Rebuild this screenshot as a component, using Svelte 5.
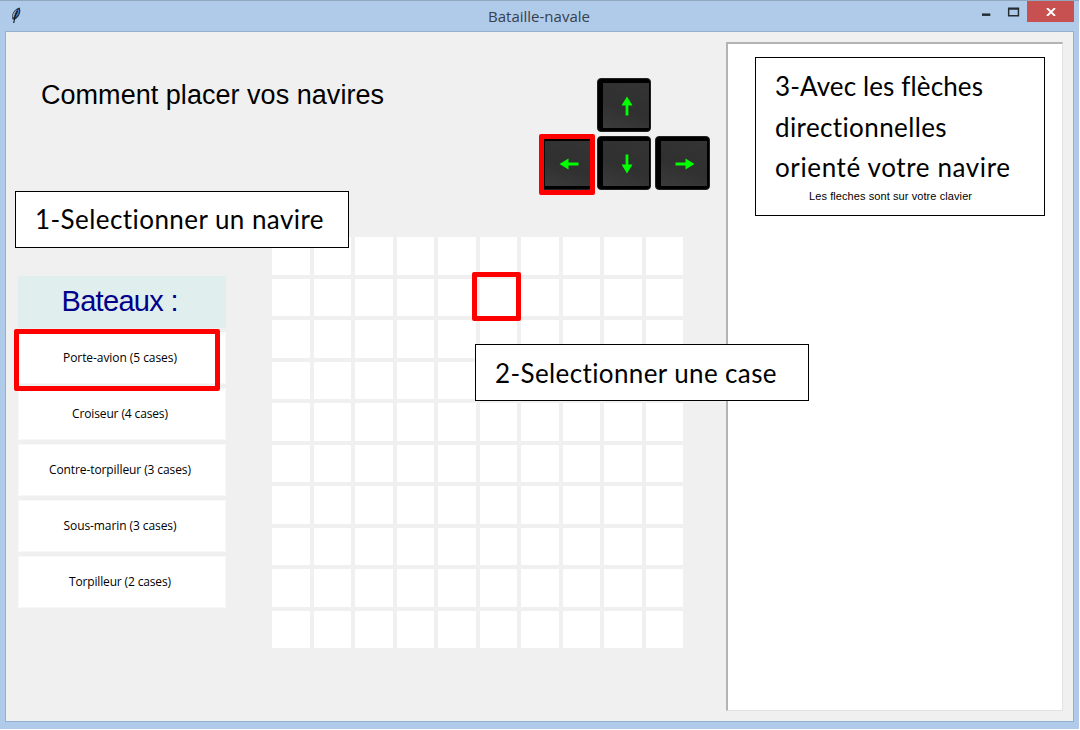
<script>
  const ships = [
    { name: 'Porte-avion (5 cases)', width: 114 },
    { name: 'Croiseur (4 cases)', width: 96 },
    { name: 'Contre-torpilleur (3 cases)', width: 142 },
    { name: 'Sous-marin (3 cases)', width: 113 },
    { name: 'Torpilleur (2 cases)', width: 102 }
  ];
  const cells = Array.from({ length: 100 }, (_, i) => i);
  const keys = [
    { area: 'up', turn: 0 },
    { area: 'left', turn: -90 },
    { area: 'down', turn: 180 },
    { area: 'right', turn: 90 }
  ];
  const steps = [
    { text: '3-Avec les flèches', width: 208 },
    { text: 'directionnelles', width: 172 },
    { text: 'orienté votre navire', width: 235 }
  ];

  // Spreads a line of text evenly over the given width.
  function fit(node, width) {
    const natural = node.getBoundingClientRect().width;
    const spacing = (width - natural) / (node.textContent.length - 1);
    node.style.letterSpacing = spacing + 'px';
    node.style.marginRight = -spacing + 'px';
  }
</script>

<div class="window">
  <header>
    <svg class="feather" width="14" height="18" viewBox="0 0 14 18">
      <path d="M2.600 12.500C.800 8 3.400 2.500 9.700.6c1.500 3.600.5 8.700-4.600 12z" fill="#26344a" />
      <path d="M4.800 10.800C5.500 7 7 4.500 9 2.300c.4 3-.8 6.500-4.200 8.500z" fill="#3e86e0" />
      <path d="M2.600 10C2.500 6.500 4.500 4 7.500 2.200 5.500 5 4.500 7 4 10.500z" fill="#9aa8b6" />
      <path d="M7.500 4Q4.500 9 3.700 16" fill="none" stroke="#111820" stroke-width="1.200" />
    </svg>
    <h1><span use:fit={102}>Bataille-navale</span></h1>
    <div class="controls">
      <svg width="46" height="21" viewBox="0 0 46 21"><path d="M0 12.500h8.500v2.500H0z" fill="#222a32" /><path fill-rule="evenodd" d="M26.500 6.500h11.500v9H26.500zM28 8.800v5.200h8.500v-5.200z" fill="#252c33" /></svg>
      <button class="close" aria-label="Fermer">
        <svg width="10" height="8" viewBox="0 0 10 8"><path d="M1 0l8 8M9 0L1 8" stroke="#fff" stroke-width="1.900" /></svg>
      </button>
    </div>
  </header>

  <main>
    <section class="game">
      <div class="top">
        <h2><span use:fit={343}>Comment placer vos navires</span></h2>
        <div class="keys">
          {#each keys as key}
            <div class="key" style:grid-area={key.area}>
              <svg width="20" height="20" viewBox="-10 -10 20 20">
                <path transform="rotate({key.turn})" d="M0-9.500L5.500-.5H1.400V9.500H-1.400V-.5H-5.500z" fill="#00ff00" />
              </svg>
            </div>
          {/each}
        </div>
      </div>
      <div class="play">
        <aside>
          <h3><span use:fit={117}>Bateaux :</span></h3>
          {#each ships as ship}
            <div class="ship"><span use:fit={ship.width}>{ship.name}</span></div>
          {/each}
        </aside>
        <div class="board">
          {#each cells as cell (cell)}<div class="cell"></div>{/each}
        </div>
      </div>
    </section>
    <section class="panel">
      <div class="callout keyhelp">
        {#each steps as step}
          <p><span use:fit={step.width}>{step.text}</span></p>
        {/each}
        <small><span use:fit={163}>Les fleches sont sur votre clavier</span></small>
      </div>
    </section>
  </main>

  <div class="mark mark-ship"></div>
  <div class="mark mark-cell"></div>
  <div class="mark mark-key"></div>
  <div class="callout first"><p><span use:fit={289}>1-Selectionner un navire</span></p></div>
  <div class="callout second"><p><span use:fit={282}>2-Selectionner une case</span></p></div>
</div>

<style>
  :global(body) { margin: 0; background: #fff; overflow: hidden; }
  * { box-sizing: border-box; }
  h1, h2, h3, p { margin: 0; font-weight: 400; }
  span { display: inline-block; white-space: nowrap; }
  .window {
    position: relative; width: 1079px; height: 729px; padding: 0 5px 7px 5px;
    background: #b0cbe9; border-top: 1px solid #91a6bf;
    display: flex; flex-direction: column; overflow: hidden;
  }
  header { height: 30px; display: flex; align-items: flex-start; flex: none; }
  .feather { margin: 6px 0 0 5px; width: 14px; flex: none; }
  h1 {
    flex: 1; text-align: center; font: 15px/31px "Open Sans", sans-serif;
    color: #37414c; padding-left: 72px;
  }
  .controls { display: flex; width: 92px; flex: none; }
  .close {
    width: 47px; height: 21px; background: #c75050; border: 0; padding: 1px 0 0 1px;
    display: flex; align-items: center; justify-content: center; flex: none;
  }
  main {
    flex: 1; display: flex; background: #f0f0f0; border: 1px solid #93b0d0;
    padding: 10px 10px 10px 12px;
  }
  .game { flex: 1; min-width: 0; }
  .top { display: flex; justify-content: space-between; height: 195px; padding: 36px 16px 0 23px; }
  h2 { font: 27px/34px "Liberation Sans", Arial, sans-serif; color: #000; }
  .keys {
    display: grid; grid-template: "none up none2" 54px "left down right" 54px / 54px 54px 55px;
    gap: 4px; height: 112px; width: 171px;
  }
  .key {
    border: 1px solid #222; border-radius: 4px; position: relative;
    display: flex; align-items: center; justify-content: center; padding: 2px 0 0 5px;
    background: linear-gradient(20deg, #3b3b3b, #303030 45%, #343434) 5px 4px / 46px 45px no-repeat, #000;
  }
  .play { display: flex; gap: 46px; }
  aside { width: 208px; margin-top: 39px; display: flex; flex-direction: column; gap: 4px; }
  h3 {
    height: 52px; background: #e0eeee; color: #00008b; text-align: center; padding-right: 4px;
    font: 29px/50px "Liberation Sans", Arial, sans-serif;
  }
  .ship {
    height: 52px; background: #fff; border: 1px solid #f8f8f8; text-align: center; color: #000;
    font: 12px/49px "Open Sans", sans-serif; padding-right: 4px;
  }
  .board {
    width: 411px; height: 411px; display: grid; grid-template: repeat(10, 1fr) / repeat(10, 1fr); gap: 4px;
  }
  .cell { background: #fff; }
  .panel {
    width: 337px; height: 669px; background: #fff; position: relative;
    border: 1px solid #e3e3e3; border-left: 2px solid #b3b3b3; border-top: 2px solid #b3b3b3;
    flex: none;
  }
  .callout { position: absolute; background: #fff; border: 1px solid #000; color: #000; padding-left: 20px; }
  .callout p { font: 26px/40.500px Lato, sans-serif; }
  .first, .second { width: 334px; height: 57px; }
  .callout.first p { line-height: 55px; }
  .callout.second p { line-height: 57px; }
  .first { left: 15px; top: 190px; padding-left: 19px; }
  .second { left: 475px; top: 343px; padding-left: 19px; }
  .keyhelp { left: 27px; top: 13px; width: 290px; height: 159px; padding: 8px 0 0 19px; }
  small { display: block; padding-left: 34px; font: 11px/16px "Liberation Sans", Arial, sans-serif; }
  .mark { position: absolute; border: 5px solid #f00; border-radius: 2px; }
  .mark-ship { left: 14px; top: 328px; width: 206px; height: 62px; }
  .mark-cell { left: 472px; top: 271px; width: 49px; height: 49px; }
  .mark-key { left: 539px; top: 133px; width: 56px; height: 61px; }
</style>
